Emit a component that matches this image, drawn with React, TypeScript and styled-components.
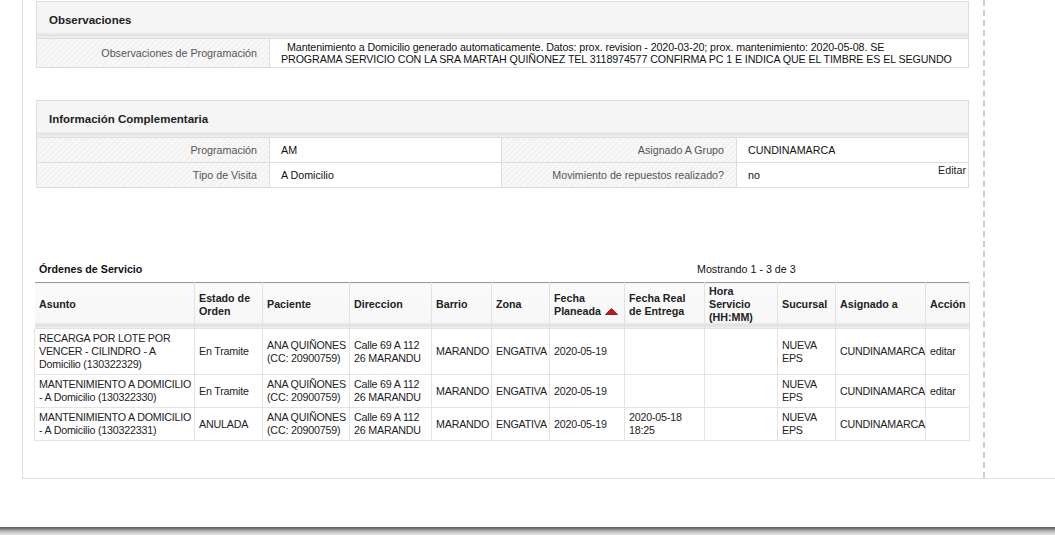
import * as React from 'react';
import styled, { createGlobalStyle } from 'styled-components';

const GlobalStyle = createGlobalStyle`
  html, body {
    margin: 0;
    padding: 0;
    background: #ffffff;
  }
  body {
    font-family: "Liberation Sans", Arial, sans-serif;
    font-size: 10.7px;
    color: #222;
  }
`;

const Page = styled.div`
  width: 1055px;
  height: 535px;
  display: flex;
  flex-direction: column;
  overflow: hidden;
`;

const Panel = styled.div`
  box-sizing: border-box;
  height: 479px;
  margin-left: 22px;
  border-left: 1px solid #dddddd;
  border-bottom: 1px solid #dddddd;
  display: flex;
`;

const Content = styled.div`
  box-sizing: border-box;
  width: 962px;
  height: 100%;
  padding: 1px 0 0 13px;
  border-right: 2px dashed #cccccc;
`;

const Spacer = styled.div`
  flex: 1;
`;

const BottomBar = styled.div`
  height: 8px;
  background: linear-gradient(to bottom, #5a5a5a 0, #7d7d7d 2px, #b8b8b8 4px, #e6e6e6 8px);
`;

const Box = styled.section<{ $gap?: number }>`
  box-sizing: border-box;
  width: 933px;
  border: 1px solid #dddddd;
  margin-bottom: ${({ $gap }) => $gap ?? 0}px;
`;

const BoxHeader = styled.div`
  height: 37px;
  box-sizing: border-box;
  padding: 0 0 1px 12px;
  display: flex;
  align-items: center;
  font-weight: bold;
  font-size: 11.5px;
  color: #222;
  background: linear-gradient(
    to bottom,
    #f5f5f5 0,
    #f5f5f5 30px,
    #e2e2e2 33px,
    #ececec 35px,
    #f7f7f7 37px
  );
  border-bottom: 1px solid #dddddd;
`;

const Grid = styled.div<{ $cols: string }>`
  display: grid;
  grid-template-columns: ${({ $cols }) => $cols};
`;

const Label = styled.div<{ $h: number; $last?: boolean }>`
  box-sizing: border-box;
  height: ${({ $h }) => $h}px;
  display: flex;
  align-items: center;
  justify-content: flex-end;
  padding-right: 12px;
  color: #555;
  background: repeating-linear-gradient(135deg, #f2f2f2 0 2px, #f8f8f8 2px 4px);
  border-right: 1px solid #dddddd;
  border-bottom: ${({ $last }) => ($last ? 'none' : '1px solid #dddddd')};
`;

const Value = styled.div<{ $h: number; $last?: boolean; $sep?: boolean }>`
  box-sizing: border-box;
  height: ${({ $h }) => $h}px;
  display: flex;
  align-items: center;
  padding-left: 11px;
  color: #111;
  background: #ffffff;
  border-right: ${({ $sep }) => ($sep ? '1px solid #dddddd' : 'none')};
  border-bottom: ${({ $last }) => ($last ? 'none' : '1px solid #dddddd')};
`;

const ObsText = styled.div`
  line-height: 12px;
  text-indent: 6px;
  padding-right: 4px;
  letter-spacing: -0.1px;
`;

const EditLink = styled.span`
  margin-left: auto;
  align-self: flex-start;
  margin-top: 1px;
  padding-right: 2px;
  color: #222;
`;

const Orders = styled.section`
  margin: 75px 0 0 -2px;
  width: 935px;
`;

const OrdersBar = styled.div`
  display: grid;
  grid-template-columns: 663px auto;
  line-height: 13px;
  padding-bottom: 6px;
`;

const OrdersTitle = styled.div`
  padding-left: 5px;
  font-weight: bold;
  color: #111;
`;

const Showing = styled.div`
  color: #111;
`;

const Table = styled.table`
  width: 935px;
  border-collapse: collapse;
  table-layout: fixed;
  border-top: 1px solid #999999;
`;

const Th = styled.th`
  box-sizing: border-box;
  height: 46px;
  padding: 2px 3px 4px 4px;
  text-align: left;
  vertical-align: middle;
  font-weight: bold;
  line-height: 13px;
  color: #222;
  border-left: 1px solid #ffffff;
  border-right: 1px solid #e2e2e2;
  background: linear-gradient(
    to bottom,
    #fafafa 0,
    #f7f7f7 39px,
    #dedede 41px,
    #e8e8e8 43px,
    #f6f6f6 46px
  );
`;

const NoWrap = styled.span`
  white-space: nowrap;
`;

const Td = styled.td`
  padding: 3px 1px 3px 4px;
  line-height: 13px;
  letter-spacing: -0.2px;
  vertical-align: middle;
  color: #222;
  border: 1px solid #e4e4e4;
`;

const SortUp = styled.svg`
  display: inline-block;
  margin-left: 4px;
  vertical-align: 0px;
`;

type Order = {
  asunto: string;
  estado: string;
  fechaReal: string;
  accion: string;
};

const orders: Order[] = [
  { asunto: 'RECARGA POR LOTE POR VENCER - CILINDRO - A Domicilio (130322329)', estado: 'En Tramite', fechaReal: '', accion: 'editar' },
  { asunto: 'MANTENIMIENTO A DOMICILIO - A Domicilio (130322330)', estado: 'En Tramite', fechaReal: '', accion: 'editar' },
  { asunto: 'MANTENIMIENTO A DOMICILIO - A Domicilio (130322331)', estado: 'ANULADA', fechaReal: '2020-05-18 18:25', accion: '' },
];

const colWidths = [160, 68, 87, 82, 60, 58, 75, 80, 73, 58, 90, 44];

export default function App() {
  return (
    <>
      <GlobalStyle />
      <Page>
        <Panel>
          <Content>
            <Box $gap={32}>
              <BoxHeader>Observaciones</BoxHeader>
              <Grid $cols="233px 1fr">
                <Label $h={28} $last>Observaciones de Programación</Label>
                <Value $h={28} $last>
                  <ObsText>
                    Mantenimiento a Domicilio generado automaticamente. Datos: prox. revision - 2020-03-20; prox. mantenimiento: 2020-05-08. SE
                    <br />
                    PROGRAMA SERVICIO CON LA SRA MARTAH QUIÑONEZ TEL 3118974577 CONFIRMA PC 1 E INDICA QUE EL TIMBRE ES EL SEGUNDO
                  </ObsText>
                </Value>
              </Grid>
            </Box>

            <Box>
              <BoxHeader>Información Complementaria</BoxHeader>
              <Grid $cols="233px 232px 235px 1fr">
                <Label $h={25}>Programación</Label>
                <Value $h={25} $sep>AM</Value>
                <Label $h={25}>Asignado A Grupo</Label>
                <Value $h={25}>CUNDINAMARCA</Value>
                <Label $h={24} $last>Tipo de Visita</Label>
                <Value $h={24} $last $sep>A Domicilio</Value>
                <Label $h={24} $last>Movimiento de repuestos realizado?</Label>
                <Value $h={24} $last>
                  no
                  <EditLink>Editar</EditLink>
                </Value>
              </Grid>
            </Box>

            <Orders>
              <OrdersBar>
                <OrdersTitle>Órdenes de Servicio</OrdersTitle>
                <Showing>Mostrando 1 - 3 de 3</Showing>
              </OrdersBar>
              <Table>
                <colgroup>
                  {colWidths.map((w, i) => (
                    <col key={i} style={{ width: w }} />
                  ))}
                </colgroup>
                <thead>
                  <tr>
                    <Th>Asunto</Th>
                    <Th>Estado de Orden</Th>
                    <Th>Paciente</Th>
                    <Th>Direccion</Th>
                    <Th>Barrio</Th>
                    <Th>Zona</Th>
                    <Th>
                      Fecha<br />
                      <NoWrap>
                        Planeada
                        <SortUp width="13" height="7" viewBox="0 0 13 7">
                          <polygon points="6.5,0.5 12.5,6.5 0.5,6.5" fill="#d81010" stroke="#6a1010" strokeWidth="0.8" />
                        </SortUp>
                      </NoWrap>
                    </Th>
                    <Th>
                      Fecha Real<br />
                      de Entrega
                    </Th>
                    <Th>Hora Servicio (HH:MM)</Th>
                    <Th>Sucursal</Th>
                    <Th>Asignado a</Th>
                    <Th>Acción</Th>
                  </tr>
                </thead>
                <tbody>
                  {orders.map((o, i) => (
                    <tr key={i}>
                      <Td>{o.asunto}</Td>
                      <Td>{o.estado}</Td>
                      <Td>ANA QUIÑONES (CC: 20900759)</Td>
                      <Td>Calle 69 A 112 26 MARANDU</Td>
                      <Td>MARANDO</Td>
                      <Td>ENGATIVA</Td>
                      <Td>2020-05-19</Td>
                      <Td>{o.fechaReal}</Td>
                      <Td></Td>
                      <Td>NUEVA EPS</Td>
                      <Td>CUNDINAMARCA</Td>
                      <Td>{o.accion}</Td>
                    </tr>
                  ))}
                </tbody>
              </Table>
            </Orders>
          </Content>
          <Spacer />
        </Panel>
        <Spacer />
        <BottomBar />
      </Page>
    </>
  );
}
